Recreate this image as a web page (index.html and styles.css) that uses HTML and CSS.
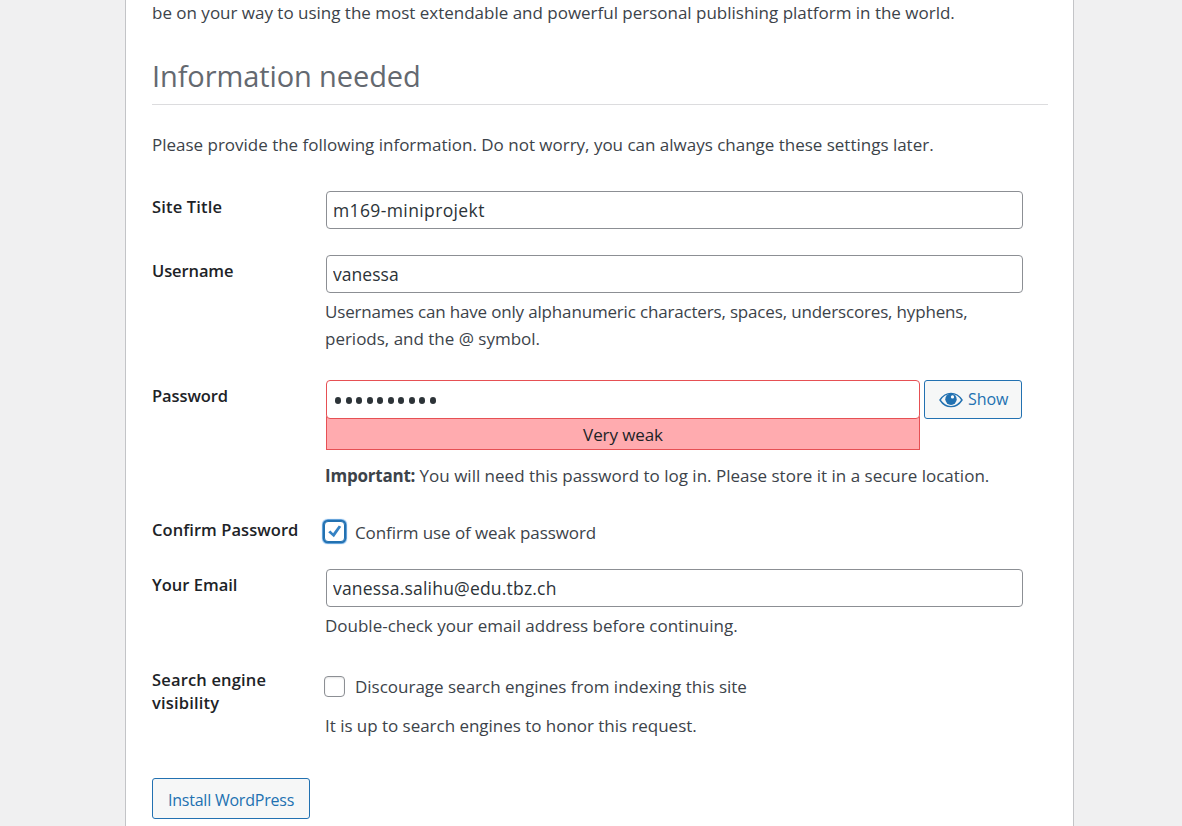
FILE: index.html
```
<!DOCTYPE html>
<html lang="en">
<head>
<meta charset="utf-8">
<title>WordPress Installation</title>
<link rel="stylesheet" href="styles.css">
</head>
<body>
<main class="panel">
  <p class="intro">be on your way to using the most extendable and powerful personal publishing platform in the world.</p>
  <h1 class="heading">Information needed</h1>
  <p class="lead">Please provide the following information. Do not worry, you can always change these settings later.</p>
  <form class="form">
    <div class="row row-title">
      <label class="label label-title" for="title">Site Title</label>
      <div><input class="field field-title" id="title" type="text" value="m169-miniprojekt"></div>
    </div>
    <div class="row row-user">
      <label class="label label-user" for="user">Username</label>
      <div>
        <input class="field" id="user" type="text" value="vanessa">
        <p class="hint"><span class="hint-user">Usernames can have only alphanumeric characters, spaces, underscores, hyphens,</span><br>periods, and the @ symbol.</p>
      </div>
    </div>
    <div class="row row-pass">
      <span class="label label-user">Password</span>
      <div>
        <div class="pass-line">
          <div class="pass-box">
            <div class="field pass"><i></i><i></i><i></i><i></i><i></i><i></i><i></i><i></i><i></i><i></i></div>
            <div class="strength">Very weak</div>
          </div>
          <button class="button show" type="button">
            <svg class="eye" viewBox="0 0 24 16"><path d="M1 8C4 3.4 8 1.4 12 1.4S20 3.4 23 8C20 12.6 16 14.6 12 14.6S4 12.6 1 8Z" fill="#f6f7f7" stroke="#2271b1" stroke-width="1.4"/><circle cx="12" cy="7.2" r="5.7" fill="#2271b1"/><circle cx="13.5" cy="4.9" r="1.6" fill="#fff"/></svg>
            <span class="show-text">Show</span>
          </button>
        </div>
        <p class="important"><b>Important:</b> You will need this password to log in. Please store it in a secure location.</p>
      </div>
    </div>
    <div class="row row-confirm">
      <span class="label label-confirm">Confirm Password</span>
      <label class="check-line"><span class="check checked"><svg viewBox="0 0 19 19"><path d="M3.2 10.2 5.4 8.5 8.1 11.2 13.8 3.6 16.2 4.7 8.9 15.3Z" fill="#3582c4"/></svg></span><span class="confirm-text">Confirm use of weak password</span></label>
    </div>
    <div class="row row-email">
      <label class="label" for="email">Your Email</label>
      <div>
        <input class="field field-email" id="email" type="text" value="vanessa.salihu@edu.tbz.ch">
        <p class="hint">Double-check your email address before continuing.</p>
      </div>
    </div>
    <div class="row row-search">
      <span class="label label-search">Search engine<br>visibility</span>
      <div>
        <label class="check-line"><span class="check"></span><span>Discourage search engines from indexing this site</span></label>
        <p class="honor">It is up to search engines to honor this request.</p>
      </div>
    </div>
    <button class="button install" type="button">Install WordPress</button>
  </form>
</main>
</body>
</html>
```
FILE: styles.css
```
* { box-sizing: border-box; }
body { margin: 0; height: 826px; overflow: hidden; background: #f0f0f1; color: #3c434a; font: 17px/27px "Open Sans", "Noto Sans", sans-serif; letter-spacing: -.01px; }
p { margin: 0; }
.panel { width: 949px; height: 826px; margin-left: 125px; padding: 0 25px 0 26px; background: #fff; border: solid #c3c4c7; border-width: 0 1px; }
.intro { height: 26px; line-height: 25px; }
.heading { margin: 0; height: 79px; padding-top: 30px; border-bottom: 1px solid #dcdcde; color: #646970; font-size: 29px; line-height: 40px; font-weight: 400; letter-spacing: -.1px; }
.lead { margin-top: 26px; }
.row { display: grid; grid-template-columns: 173px 1fr; }
.row-title { margin-top: 33px; }
.row-user { margin-top: 26px; }
.row-pass { margin-top: 28px; }
.row-confirm { margin-top: 25px; }
.row-email { margin-top: 24px; }
.row-search { margin-top: 26px; }
.label { padding-top: 4px; line-height: 23px; font-weight: 600; font-size: 16.5px; color: #1d2327; letter-spacing: 0; }
.label-title { letter-spacing: .17px; }
.label-user { letter-spacing: -.1px; }
.label-confirm { letter-spacing: .06px; }
.label-search { padding-top: 3px; letter-spacing: .17px; }
.field { display: block; width: 697px; height: 38px; margin-left: 1px; padding: 0 6px; border: 1px solid #8c8f94; border-radius: 4px; background: #fff; color: #2c3338; font: 17.5px "Open Sans", "Noto Sans", sans-serif; letter-spacing: .05px; }
.field-title { letter-spacing: .38px; }
.field-email { letter-spacing: .19px; }
.hint { margin-top: 5px; }
.hint-user { letter-spacing: -.17px; }
.pass-line { display: flex; gap: 4px; }
.pass-box { width: 595px; }
.pass { display: flex; align-items: center; gap: 4.5px; position: relative; width: 594px; height: 39px; padding: 2px 8px 0; border-color: #e65054; }
.pass i { width: 6px; height: 6.5px; border-radius: 50%; background: #2c3338; }
.strength { margin: -3px 0 0 1px; width: 594px; height: 34px; padding-top: 5px; border: 1px solid #e65054; border-top: 0; background: #ffabaf; color: #1d2327; text-align: center; line-height: 28px; letter-spacing: -.1px; }
.important { margin-top: 12px; letter-spacing: 0; }
.important b { letter-spacing: -.22px; }
.button { border: 1px solid #2271b1; border-radius: 3px; background: #f6f7f7; color: #2271b1; font: 16px "Open Sans", "Noto Sans", sans-serif; }
.show { display: flex; align-items: center; gap: 5px; width: 98px; height: 39px; padding: 0 0 0 14px; }
.show-text { padding-bottom: 2px; letter-spacing: -.1px; }
.eye { width: 24px; height: 16px; }
.check-line { display: flex; align-items: center; height: 27px; gap: 10px; }
.row-confirm .check-line { margin-top: 4px; }
.row-search .check-line { margin-top: 8px; }
.confirm-text { padding-top: 2px; letter-spacing: -.09px; }
.check { width: 21px; height: 21px; margin-left: -1px; border: 1px solid #8c8f94; border-radius: 4px; background: #fff; box-shadow: inset 0 1px 2px rgba(0, 0, 0, .1); }
.checked { border-color: #2271b1; box-shadow: 0 0 0 1.3px #2271b1, 0 0 1px 1.5px #72aee6; }
.checked svg { display: block; width: 19px; height: 19px; }
.honor { margin-top: 12px; letter-spacing: -.03px; }
.install { display: block; width: 158px; height: 41px; margin-top: 39px; padding: 2px 0 0; letter-spacing: -.22px; }
```
